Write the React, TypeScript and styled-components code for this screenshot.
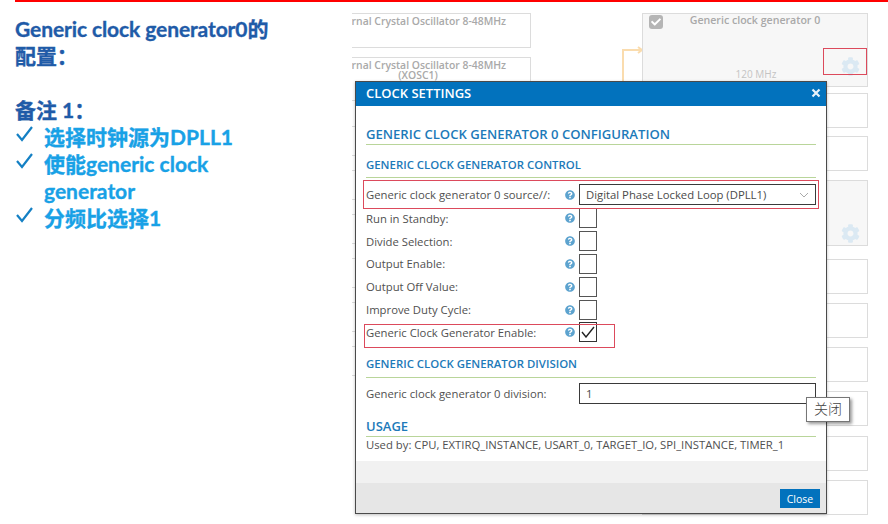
import React from "react";
import styled, { createGlobalStyle } from "styled-components";
import { FaCog, FaQuestionCircle, FaCheck } from "react-icons/fa";

const Global = createGlobalStyle`
  html, body { margin: 0; padding: 0; background: #fff; }
  #root { width: 888px; height: 524px; overflow: hidden; }
`;

const Page = styled.div`
  width: 888px;
  height: 524px;
  display: flex;
  flex-direction: column;
  background: #fff;
  overflow: hidden;
`;
const RedRule = styled.div`
  height: 2px;
  margin-left: 15px;
  background: #f00;
  flex: none;
`;
const Body = styled.div`
  flex: 1;
  display: flex;
  min-height: 0;
`;
const Notes = styled.section`
  width: 352px;
  flex: none;
  box-sizing: border-box;
  padding: 13px 60px 0 15px;
  font-family: Lato, "Noto Sans CJK SC", sans-serif;
  font-weight: 700;
  font-size: 21px;
  line-height: 27px;
  -webkit-text-stroke: 0.35px currentColor;
`;
const Title = styled.h1`
  margin: 0 0 27px;
  font: inherit;
  letter-spacing: -0.1px;
  color: #1f5ba8;
`;
const NoteHead = styled.h2`
  margin: 0;
  font: inherit;
  color: #1f5ba8;
`;
const CheckList = styled.ul`
  margin: 0;
  padding: 0;
  list-style: none;
  color: #18a1e6;
`;
const CheckItem = styled.li`
  display: flex;
  gap: 10px;
`;
const Tick = styled.svg`
  width: 19px;
  height: 19px;
  flex: none;
  margin-top: 1px;
  fill: none;
  stroke: #1480c4;
  stroke-width: 2.2;
`;

const Canvas = styled.section`
  position: relative;
  flex: 1;
  overflow: hidden;
  font-family: "Open Sans", "Noto Sans CJK SC", sans-serif;
`;
const Node = styled.div<{ $x: number; $y: number; $w: number; $h: number }>`
  position: absolute;
  left: ${(p) => p.$x}px;
  top: ${(p) => p.$y}px;
  width: ${(p) => p.$w}px;
  height: ${(p) => p.$h}px;
  box-sizing: border-box;
  border: 1.5px solid #dcdcdc;
  background: #fff;
  color: #a9a9a9;
  font-size: 10.4px;
  font-weight: 600;
  line-height: 10px;
  text-align: center;
  padding-top: 2px;
`;
const GenNode = styled(Node)`
  background: #f7f7f7;
  font-size: 10.6px;
  line-height: 10px;
  padding-top: 1px;
`;
const NodeCheck = styled.span`
  position: absolute;
  left: 6px;
  top: 1px;
  width: 14px;
  height: 14px;
  border-radius: 3px;
  background: #b5b5b5;
  color: #fff;
  display: flex;
  align-items: center;
  justify-content: center;
  font-size: 10px;
`;
const Freq = styled.span`
  position: absolute;
  left: 0;
  right: 0;
  bottom: 7px;
  font-weight: 400;
  color: #c4c4c4;
  font-size: 10px;
  padding-left: 2px;
`;
const Gear = styled.span<{ $x: number; $y: number }>`
  position: absolute;
  left: ${(p) => p.$x}px;
  top: ${(p) => p.$y}px;
  color: #dbe9f3;
  font-size: 19px;
  line-height: 0;
`;
const RedMark = styled.div<{ $x: number; $y: number; $w: number; $h: number }>`
  position: absolute;
  left: ${(p) => p.$x}px;
  top: ${(p) => p.$y}px;
  width: ${(p) => p.$w}px;
  height: ${(p) => p.$h}px;
  box-sizing: border-box;
  border: 1px solid #dc4a5c;
  pointer-events: none;
`;
const Wire = styled.svg`
  position: absolute;
  left: 262px;
  top: 40px;
  width: 30px;
  height: 50px;
  fill: none;
  stroke: #fadcae;
  stroke-width: 2;
`;

const Modal = styled.div`
  position: absolute;
  left: 3px;
  top: 79px;
  width: 472px;
  height: 433px;
  box-sizing: border-box;
  border: 1px solid #4a4a4a;
  background: #fff;
  box-shadow: 0 1px 3px rgba(0, 0, 0, 0.25);
  display: flex;
  flex-direction: column;
  color: #505050;
  font-size: 11.3px;
`;
const ModalBar = styled.header`
  height: 24px;
  flex: none;
  background: #0272bd;
  color: #fff;
  display: flex;
  align-items: center;
  justify-content: space-between;
  padding: 0 5px 2px 10px;
  box-sizing: border-box;
  font-size: 13px;
  font-weight: 600;
`;
const ModalBody = styled.div`
  flex: 1;
  min-height: 0;
  padding: 18px 10px 0;
  background: #fff;
`;
const Heading = styled.h3`
  margin: 0;
  font-size: 13.1px;
  line-height: 20px;
  font-weight: 600;
  color: #1d7ab9;
  border-bottom: 1.5px solid #b9d59a;
`;
const SubHeading = styled(Heading)<{ $top: number; $pad: number }>`
  margin-top: ${(p) => p.$top}px;
  font-size: 11.4px;
  line-height: 16px;
  padding-bottom: ${(p) => p.$pad}px;
`;
const Row = styled.div<{ $h?: number; $pt?: number }>`
  display: grid;
  grid-template-columns: 199px 14px 1fr;
  align-items: center;
  box-sizing: border-box;
  height: ${(p) => p.$h ?? 22.8}px;
  padding-top: ${(p) => p.$pt ?? 0}px;
`;
const FieldBox = styled.div`
  height: 21px;
  box-sizing: border-box;
  border: 1px solid #3a3a3a;
  display: flex;
  align-items: center;
  justify-content: space-between;
  padding: 0 6px;
  color: #4a4a4a;
`;
const Help = styled.span`
  color: #5da3cf;
  font-size: 10px;
  line-height: 0;
`;
const CheckBox = styled.span<{ $strong?: boolean }>`
  width: 18px;
  height: 20px;
  box-sizing: border-box;
  border: 1px solid ${(p) => (p.$strong ? "#333" : "#555")};
  display: flex;
  align-items: center;
  justify-content: center;
`;
const SmallSvg = styled.svg<{ $stroke?: string }>`
  fill: none;
  stroke: ${(p) => p.$stroke ?? "#222"};
`;
const UsageHead = styled(Heading)`
  margin-top: 11px;
  font-size: 13px;
  line-height: 18px;
  padding-bottom: 1px;
`;
const UsageText = styled.p`
  margin: 0;
  font-size: 11.3px;
  line-height: 15px;
`;
const SoftBand = styled.div`
  height: 22px;
  flex: none;
  background: #f1f1f1;
`;
const ModalFoot = styled.footer`
  height: 30px;
  flex: none;
  background: #e6e6e6;
  display: flex;
  justify-content: flex-end;
  padding: 6px 6px 0 0;
  box-sizing: border-box;
`;
const CloseBtn = styled.button`
  width: 40px;
  height: 19px;
  border: 0;
  padding: 0;
  background: #0272bd;
  color: #fff;
  font: 400 10.5px "Open Sans", sans-serif;
`;
const ToolTip = styled.div`
  position: absolute;
  left: 454px;
  top: 395px;
  width: 44px;
  height: 25px;
  box-sizing: border-box;
  border: 1px solid #767676;
  background: #fff;
  box-shadow: 2px 2px 3px rgba(0, 0, 0, 0.4);
  color: #444;
  font-size: 14px;
  font-weight: 300;
  text-align: center;
  line-height: 22px;
`;

const rightBoxes: [number, number][] = [
  [91, 35], [134, 35], [257, 35], [301, 35], [345, 35], [389, 35], [434, 35], [478, 35],
];
const leftBoxes: [number, number][] = [
  [124, 30], [168, 30], [212, 30], [256, 30], [300, 30], [344, 30],
];
const plainRows = [
  "Run in Standby:",
  "Divide Selection:",
  "Output Enable:",
  "Output Off Value:",
  "Improve Duty Cycle:",
];

const CheckTick = () => (
  <Tick viewBox="0 0 19 19" aria-hidden>
    <path d="M2 10 L7 16 L17 3" />
  </Tick>
);

export default function App() {
  return (
    <Page>
      <Global />
      <RedRule />
      <Body>
        <Notes>
          <Title>Generic clock generator0的<br />配置：</Title>
          <NoteHead>备注 1：</NoteHead>
          <CheckList>
            <CheckItem><CheckTick />选择时钟源为DPLL1</CheckItem>
            <CheckItem><CheckTick />使能generic clock generator</CheckItem>
            <CheckItem><CheckTick />分频比选择1</CheckItem>
          </CheckList>
        </Notes>
        <Canvas>
          <Node $x={-47} $y={11} $w={226} $h={35}>External Crystal Oscillator 8-48MHz</Node>
          <Node $x={-47} $y={55} $w={226} $h={44}>External Crystal Oscillator 8-48MHz<br />(XOSC1)</Node>
          {leftBoxes.map(([y, h]) => (
            <Node key={y} $x={-47} $y={y} $w={226} $h={h} />
          ))}
          <Wire viewBox="0 0 30 50" aria-hidden>
            <path d="M9 50 V8 H27 M24 5 L28 8 L24 11" />
          </Wire>
          <GenNode $x={290} $y={11} $w={226} $h={74}>
            <NodeCheck><FaCheck /></NodeCheck>
            Generic clock generator 0
            <Freq>120 MHz</Freq>
          </GenNode>
          {rightBoxes.map(([y, h]) => (
            <Node key={y} $x={290} $y={y} $w={226} $h={h} />
          ))}
          <GenNode $x={290} $y={178} $w={226} $h={66} />
          <Gear $x={489} $y={55}><FaCog /></Gear>
          <Gear $x={489} $y={222}><FaCog /></Gear>
          <RedMark $x={471} $y={46} $w={44} $h={27} />

          <Modal>
            <ModalBar>
              CLOCK SETTINGS
              <svg width="10" height="10" viewBox="0 0 10 10" fill="none" stroke="#e8f2fa" strokeWidth="2.2" aria-hidden>
                <path d="M1.5 1.5 L8.5 8.5 M8.5 1.5 L1.5 8.5" />
              </svg>
            </ModalBar>
            <ModalBody>
              <Heading>GENERIC CLOCK GENERATOR 0 CONFIGURATION</Heading>
              <SubHeading $top={12} $pad={4}>GENERIC CLOCK GENERATOR CONTROL</SubHeading>
              <Row $h={29} $pt={4}>
                <span>Generic clock generator 0 source//:</span>
                <Help><FaQuestionCircle /></Help>
                <FieldBox>
                  Digital Phase Locked Loop (DPLL1)
                  <SmallSvg $stroke="#aaa" width="10" height="6" viewBox="0 0 10 6" aria-hidden>
                    <path d="M1 1 L5 5 L9 1" />
                  </SmallSvg>
                </FieldBox>
              </Row>
              {plainRows.map((label) => (
                <Row key={label}>
                  <span>{label}</span>
                  <Help><FaQuestionCircle /></Help>
                  <CheckBox />
                </Row>
              ))}
              <Row>
                <span>Generic Clock Generator Enable:</span>
                <Help><FaQuestionCircle /></Help>
                <CheckBox $strong>
                  <SmallSvg width="14" height="12" viewBox="0 0 14 12" strokeWidth="1.4" aria-hidden>
                    <path d="M1 6 L5 11 L13 1" />
                  </SmallSvg>
                </CheckBox>
              </Row>
              <SubHeading $top={12} $pad={5}>GENERIC CLOCK GENERATOR DIVISION</SubHeading>
              <Row $h={28} $pt={3}>
                <span>Generic clock generator 0 division:</span>
                <span />
                <FieldBox>1</FieldBox>
              </Row>
              <UsageHead>USAGE</UsageHead>
              <UsageText>Used by: CPU, EXTIRQ_INSTANCE, USART_0, TARGET_IO, SPI_INSTANCE, TIMER_1</UsageText>
            </ModalBody>
            <SoftBand />
            <ModalFoot>
              <CloseBtn>Close</CloseBtn>
            </ModalFoot>
          </Modal>
          <RedMark $x={11} $y={178} $w={456} $h={29} />
          <RedMark $x={12} $y={322} $w={251} $h={24} />
          <ToolTip>关闭</ToolTip>
        </Canvas>
      </Body>
    </Page>
  );
}
